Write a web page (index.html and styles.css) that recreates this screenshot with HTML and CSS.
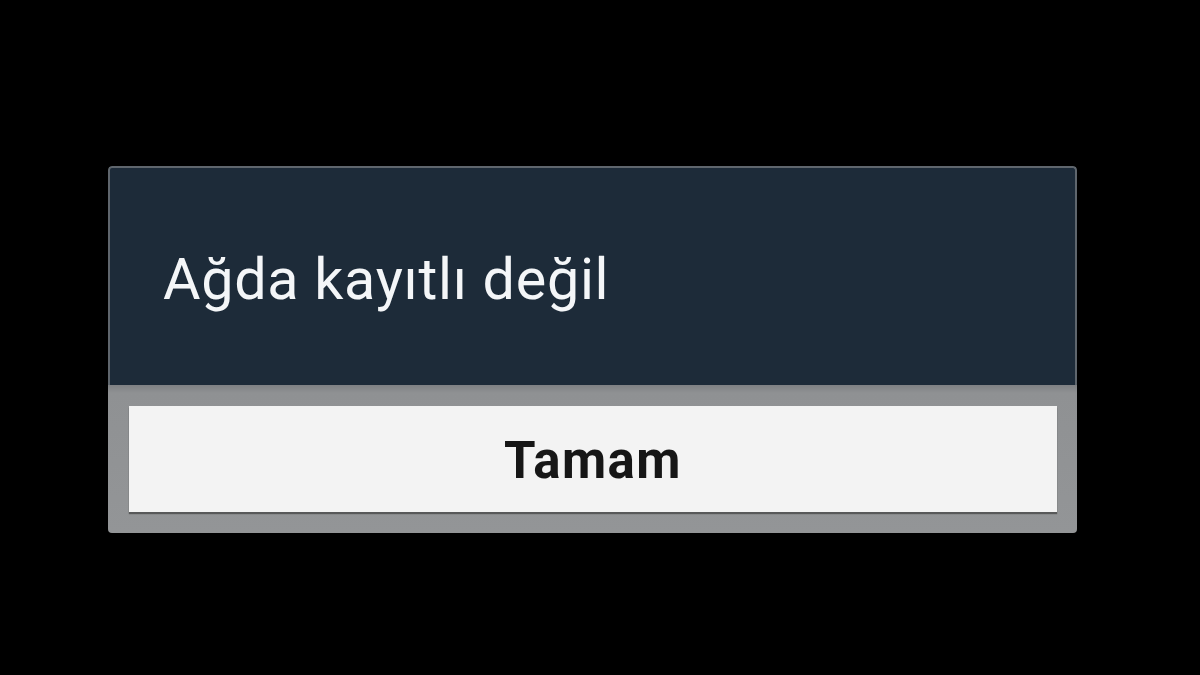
FILE: index.html
```html
<!DOCTYPE html>
<html lang="tr">
<head>
<meta charset="utf-8">
<title>Ağda kayıtlı değil</title>
<link rel="stylesheet" href="styles.css">
</head>
<body>
<div class="dialog">
  <div class="header">
    <div class="title">Ağda kayıtlı değil</div>
  </div>
  <div class="actions">
    <button class="btn">Tamam</button>
  </div>
</div>
</body>
</html>
```
FILE: styles.css
```css
html, body {
  margin: 0;
  padding: 0;
  background: #000;
  width: 1200px;
  height: 675px;
  overflow: hidden;
}
.dialog {
  margin: 166px 0 0 108px;
  width: 969px;
  border-radius: 4px;
  overflow: hidden;
  display: flex;
  flex-direction: column;
}
.header {
  height: 219px;
  box-sizing: border-box;
  background: #1d2b39;
  border: 2px solid #5f666d;
  border-bottom: none;
  border-radius: 4px 4px 0 0;
  padding: 79px 0 0 53px;
}
.title {
  font-family: Roboto, "Noto Sans", sans-serif;
  font-size: 57.5px;
  letter-spacing: 0.7px;
  line-height: 66px;
  color: #f4f6f8;
}
.actions {
  background: linear-gradient(#7f8184 0, #8f9193 8px, #939597 100%);
  padding: 21px 20px 21px 21px;
  display: flex;
}
.btn {
  flex: 1;
  height: 106px;
  box-sizing: border-box;
  border: none;
  margin: 0;
  padding: 4px 0 0 0;
  background: #f3f3f3;
  box-shadow: 0 2px 1px rgba(40, 40, 40, 0.55);
  font-family: Roboto, "Noto Sans", sans-serif;
  font-weight: 700;
  font-size: 51px;
  letter-spacing: 1.4px;
  line-height: 102px;
  color: #161616;
}
```
